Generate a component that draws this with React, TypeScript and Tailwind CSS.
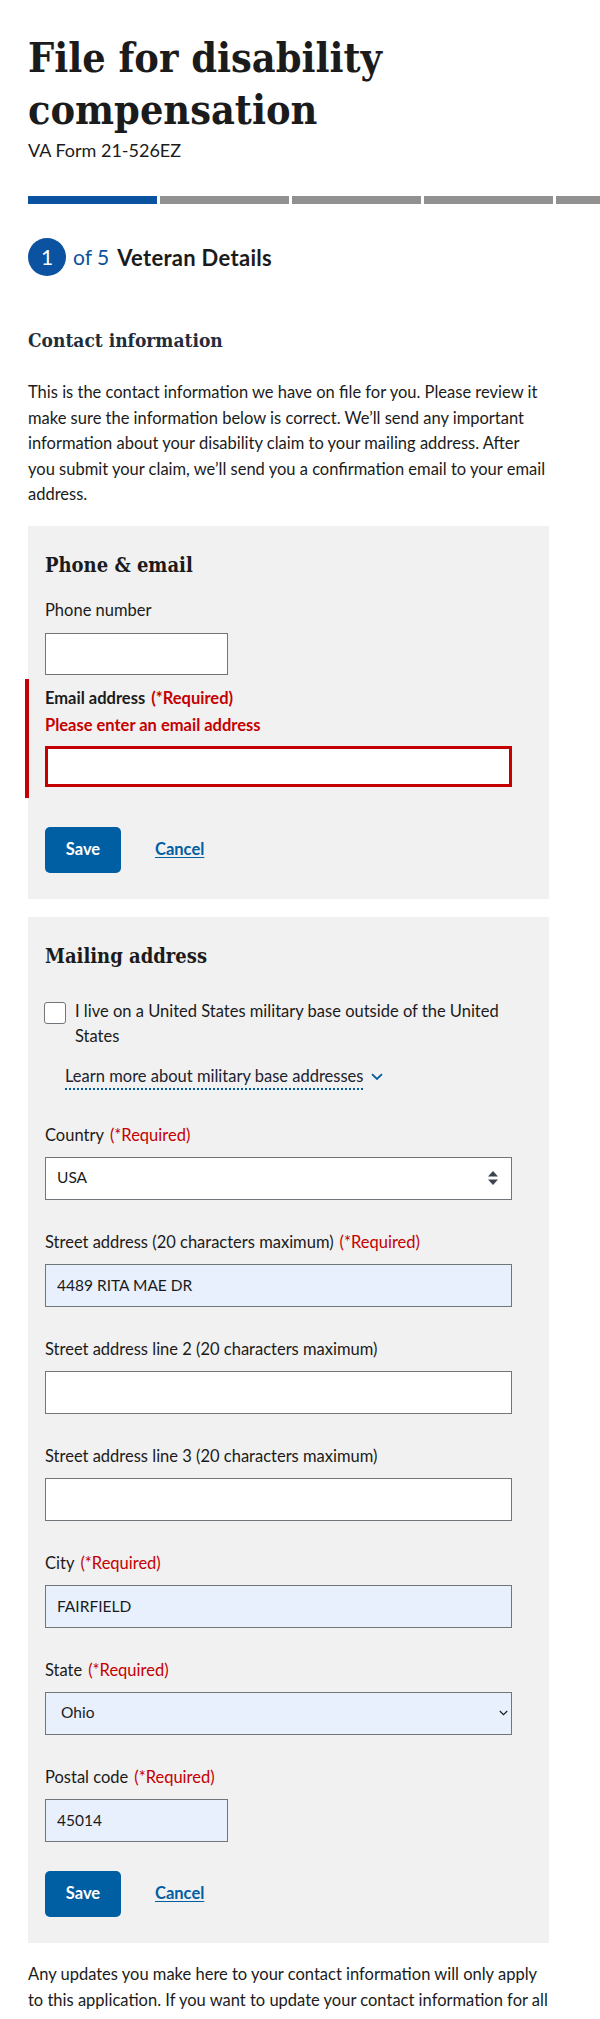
import React from "react";

const REQ = "text-[#c40000]";

function Label({ text, required }: { text: string; required?: boolean }) {
  return (
    <label className="block text-[16.5px] leading-[25px] text-[#1b1b1b]">
      {text}
      {required && <span className={`ml-[6px] ${REQ}`}>(*Required)</span>}
    </label>
  );
}

function TextField({
  label,
  required,
  value,
  narrow,
}: {
  label: string;
  required?: boolean;
  value?: string;
  narrow?: boolean;
}) {
  const filled = value !== undefined;
  return (
    <div className="mt-[30px]">
      <Label text={label} required={required} />
      <input
        defaultValue={value ?? ""}
        className={`mt-[9px] block h-[43px] ${narrow ? "w-[183px]" : "w-[467px]"} border border-[#71767a] px-[11px] text-[15.5px] text-[#1b1b1b] outline-none ${
          filled ? "bg-[#e8f0fe]" : "bg-white"
        }`}
      />
    </div>
  );
}

function SaveRow() {
  return (
    <div className="mt-[29px] flex items-center">
      <button className="h-[46px] w-[76px] rounded-[5px] bg-[#005ea2] text-[16.5px] font-bold text-white">
        Save
      </button>
      <a href="#" className="ml-[34px] text-[16.5px] font-bold text-[#005ea2] underline underline-offset-2">
        Cancel
      </a>
    </div>
  );
}

function SortIcon() {
  return (
    <svg width="10" height="14" viewBox="0 0 10 14" className="pointer-events-none absolute right-[14px] top-1/2 -translate-y-1/2">
      <path d="M5 0 L10 5.5 H0 Z" fill="#3d4551" />
      <path d="M5 14 L10 8.5 H0 Z" fill="#3d4551" />
    </svg>
  );
}

function ChevronSmall() {
  return (
    <svg width="9" height="6" viewBox="0 0 9 6" className="pointer-events-none absolute right-[4px] top-1/2 -translate-y-1/2">
      <path d="M0.8 1 L4.5 4.6 L8.2 1" fill="none" stroke="#1b1b1b" strokeWidth="1.2" />
    </svg>
  );
}

export default function App() {
  return (
    <div className="h-[2019px] w-[600px] overflow-hidden bg-white px-[28px] pt-[32px] font-['Lato',sans-serif] text-[#1b1b1b]">
      <h1 className="font-['DejaVu_Serif_Condensed','DejaVu_Serif',serif] text-[41px] font-bold leading-[52px] text-[#1b1b1b]">
        File for disability compensation
      </h1>
      <div className="mt-[2px] text-[18px] leading-[24px]">VA Form 21-526EZ</div>

      <div className="mt-[34px] flex gap-[3px]">
        <div className="h-[8px] w-[129px] shrink-0 bg-[#0b52a0]" />
        <div className="h-[8px] w-[129px] shrink-0 bg-[#919191]" />
        <div className="h-[8px] w-[129px] shrink-0 bg-[#919191]" />
        <div className="h-[8px] w-[129px] shrink-0 bg-[#919191]" />
        <div className="h-[8px] w-[129px] shrink-0 bg-[#919191]" />
      </div>

      <div className="mt-[34px] flex h-[38px] items-center">
        <div className="flex h-[38px] w-[38px] items-center justify-center rounded-full bg-[#0b52a0] text-[21px] text-white">
          1
        </div>
        <span className="ml-[7px] text-[21px] text-[#0b52a0]">of 5</span>
        <span className="ml-[8px] text-[22px] font-bold tracking-[0.3px]">Veteran Details</span>
      </div>

      <h2 className="mt-[50px] font-['DejaVu_Serif_Condensed','DejaVu_Serif',serif] text-[19px] font-bold leading-[28px] text-[#1f2d3d]">
        Contact information
      </h2>
      <p className="mt-[26px] w-[521px] text-[16.5px] leading-[25.5px]">
        This is the contact information we have on file for you. Please review it make sure the information below
        is correct. We’ll send any important information about your disability claim to your mailing address. After
        you submit your claim, we’ll send you a confirmation email to your email address.
      </p>

      {/* Phone & email */}
      <section className="mt-[18px] w-[521px] bg-[#f1f1f1] px-[17px] pb-[26px] pt-[25px]">
        <h3 className="font-['DejaVu_Serif_Condensed','DejaVu_Serif',serif] text-[20px] font-bold leading-[28px]">
          Phone &amp; email
        </h3>
        <div className="mt-[19px]">
          <Label text="Phone number" />
          <input className="mt-[10px] block h-[42px] w-[183px] border border-[#71767a] bg-white px-[11px] outline-none" />
        </div>
        <div className="-ml-[20px] mt-[4px] border-l-4 border-[#c40000] pb-[11px] pl-[16px] pt-[7px]">
          <label className="block text-[16.5px] font-bold leading-[25px]">
            Email address<span className={`ml-[6px] ${REQ}`}>(*Required)</span>
          </label>
          <div className={`mt-[2px] text-[16.5px] font-bold leading-[25px] ${REQ}`}>Please enter an email address</div>
          <input className="mt-[8px] block h-[41px] w-[467px] border-[3px] border-[#c40000] bg-white px-[10px] outline-none" />
        </div>
        <SaveRow />
      </section>

      {/* Mailing address */}
      <section className="mt-[18px] w-[521px] bg-[#f1f1f1] px-[17px] pb-[26px] pt-[25px]">
        <h3 className="font-['DejaVu_Serif_Condensed','DejaVu_Serif',serif] text-[20px] font-bold leading-[28px]">
          Mailing address
        </h3>
        <div className="mt-[29px] flex items-start">
          <div className="-ml-[1px] mt-[3px] h-[22px] w-[22px] shrink-0 rounded-[3px] border border-[#71767a] bg-white" />
          <label className="ml-[9px] w-[437px] text-[16.5px] leading-[25px]">
            I live on a United States military base outside of the United States
          </label>
        </div>
        <div className="ml-[20px] mt-[16px] flex items-center">
          <span className="border-b-2 border-dotted border-[#005ea2] text-[16.5px] leading-[23px] text-[#1b2230]">
            Learn more about military base addresses
          </span>
          <svg width="12" height="8" viewBox="0 0 12 8" className="ml-[8px]">
            <path d="M1 1.2 L6 6 L11 1.2" fill="none" stroke="#005ea2" strokeWidth="1.8" />
          </svg>
        </div>

        <div className="mt-[33px]">
          <Label text="Country" required />
          <div className="relative mt-[9px] w-[467px]">
            <select className="block h-[43px] w-[467px] appearance-none border border-[#71767a] bg-white pl-[11px] text-[15.5px] text-[#1b1b1b] outline-none">
              <option>USA</option>
            </select>
            <SortIcon />
          </div>
        </div>

        <TextField label="Street address (20 characters maximum)" required value="4489 RITA MAE DR" />
        <TextField label="Street address line 2 (20 characters maximum)" />
        <TextField label="Street address line 3 (20 characters maximum)" />
        <TextField label="City" required value="FAIRFIELD" />

        <div className="mt-[30px]">
          <Label text="State" required />
          <div className="relative mt-[9px] w-[467px]">
            <select className="block h-[43px] w-[467px] appearance-none border border-[#71767a] bg-[#e8f0fe] pl-[15px] text-[15.5px] text-[#1b1b1b] outline-none">
              <option>Ohio</option>
            </select>
            <ChevronSmall />
          </div>
        </div>

        <TextField label="Postal code" required value="45014" narrow />

        <SaveRow />
      </section>

      <p className="mt-[18px] w-[521px] text-[16.5px] leading-[26px]">
        Any updates you make here to your contact information will only apply to this application. If you want to
        update your contact information for all your VA accounts, please go to your profile page.
      </p>
    </div>
  );
}
